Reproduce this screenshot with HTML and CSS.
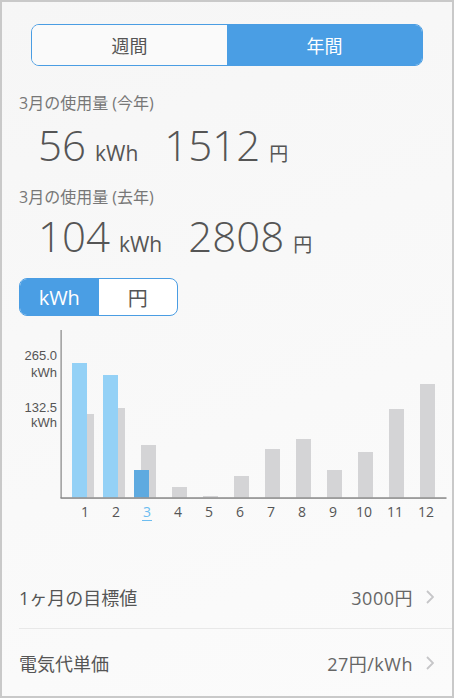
FILE: index.html
```html
<!DOCTYPE html>
<html lang="ja">
<head>
<meta charset="utf-8">
<title>使用量</title>
<link rel="stylesheet" href="styles.css">
</head>
<body>
<div class="app">
  <div class="seg">
    <div class="seg-item">週間</div>
    <div class="seg-item active">年間</div>
  </div>

  <div class="label first">3月の使用量 (今年)</div>
  <div class="vals row1">
    <div class="pair"><span class="num">56</span><span class="unit">kWh</span></div>
    <div class="pair"><span class="num">1512</span><span class="unit yen">円</span></div>
  </div>

  <div class="label second">3月の使用量 (去年)</div>
  <div class="vals row2">
    <div class="pair"><span class="num">104</span><span class="unit">kWh</span></div>
    <div class="pair"><span class="num">2808</span><span class="unit yen">円</span></div>
  </div>

  <div class="toggle">
    <div class="toggle-item active">kWh</div>
    <div class="toggle-item">円</div>
  </div>

  <svg class="chart" width="450" height="200" viewBox="2 325 450 200" xmlns="http://www.w3.org/2000/svg">
    <text class="ylab" x="57" y="360">265.0</text>
    <text class="ylab" x="57" y="377">kWh</text>
    <text class="ylab" x="57" y="412">132.5</text>
    <text class="ylab" x="57" y="427">kWh</text>

    <g class="gray">
      <rect x="79" y="414" width="15" height="83.5"/>
      <rect x="110" y="408" width="15" height="89.5"/>
      <rect x="141" y="445" width="15" height="52.5"/>
      <rect x="172" y="487" width="15" height="10.5"/>
      <rect x="203" y="496" width="15" height="1.5"/>
      <rect x="234" y="476" width="15" height="21.5"/>
      <rect x="265" y="449" width="15" height="48.5"/>
      <rect x="296" y="439" width="15" height="58.5"/>
      <rect x="327" y="470" width="15" height="27.5"/>
      <rect x="358" y="452" width="15" height="45.5"/>
      <rect x="389" y="409" width="15" height="88.5"/>
      <rect x="420" y="384" width="15" height="113.5"/>
    </g>
    <rect class="blue-light" x="72" y="363" width="15" height="134.5"/>
    <rect class="blue-light" x="103" y="375" width="15" height="122.5"/>
    <rect class="blue-dark" x="134" y="470" width="15" height="27.5"/>

    <rect class="axis" x="60.5" y="330" width="1.2" height="168"/>
    <rect class="axis" x="60.5" y="497.3" width="386" height="1.5"/>

    <g class="mlab">
      <text x="85" y="517">1</text>
      <text x="116" y="517">2</text>
      <text class="cur" x="147" y="517">3</text>
      <text x="178" y="517">4</text>
      <text x="209" y="517">5</text>
      <text x="240" y="517">6</text>
      <text x="271" y="517">7</text>
      <text x="302" y="517">8</text>
      <text x="333" y="517">9</text>
      <text x="364" y="517">10</text>
      <text x="395" y="517">11</text>
      <text x="426" y="517">12</text>
    </g>
    <rect class="uline" x="142" y="520" width="10" height="1"/>
  </svg>

  <div class="list">
    <div class="list-row r1">
      <span class="list-label">1ヶ月の目標値</span>
      <span class="list-value">3000円</span>
      <svg class="chev" width="8" height="14" viewBox="0 0 8 14"><path d="M1 1 L7 7 L1 13" fill="none" stroke="#c6c6c8" stroke-width="1.8"/></svg>
    </div>
    <div class="list-row r2">
      <span class="list-label">電気代単価</span>
      <span class="list-value">27円/kWh</span>
      <svg class="chev" width="8" height="14" viewBox="0 0 8 14"><path d="M1 1 L7 7 L1 13" fill="none" stroke="#c6c6c8" stroke-width="1.8"/></svg>
    </div>
  </div>
</div>
</body>
</html>
```

FILE: styles.css
```css
html, body {
  margin: 0;
  padding: 0;
  background: #f8f8f8;
}

body {
  font-family: "Open Sans", "Noto Sans CJK JP", sans-serif;
  color: #555;
}

.app {
  width: 454px;
  height: 698px;
  box-sizing: border-box;
  border: 2px solid #c9c9c9;
  background: linear-gradient(160deg, #f6f6f6 0%, #f9f9f9 60%, #fbfbfb 100%);
  padding-top: 22px;
  overflow: hidden;
}

.seg {
  display: flex;
  margin: 0 29px;
  height: 42px;
  box-sizing: border-box;
  border: 1px solid #4a9de3;
  border-radius: 8px;
  overflow: hidden;
}

.seg-item {
  flex: 1;
  display: flex;
  align-items: center;
  justify-content: center;
  font-size: 18px;
  color: #555;
  background: #fafafa;
}

.seg-item.active {
  background: #4a9ee4;
  color: #fff;
}

.label {
  margin-left: 17px;
  height: 20px;
  line-height: 20px;
  font-size: 16px;
  color: #777;
}

.label.first { margin-top: 27px; }
.label.second { margin-top: 18px; }

.vals {
  display: flex;
  align-items: baseline;
  gap: 26px;
  margin-left: 36px;
  height: 48px;
  line-height: 48px;
}

.vals.row1 { margin-top: 8px; }
.vals.row2 { margin-top: 5px; }

.pair {
  display: flex;
  align-items: baseline;
  gap: 9px;
}

.num {
  font-size: 42px;
  font-weight: 300;
  color: #555;
}

.unit {
  font-size: 21px;
  color: #555;
}

.unit.yen {
  font-size: 19px;
}

.toggle {
  display: flex;
  margin: 18px 0 0 17px;
  width: 159px;
  height: 38px;
  box-sizing: border-box;
  border: 1px solid #4a9de3;
  border-radius: 8px;
  overflow: hidden;
  background: #fff;
}

.toggle-item {
  flex: 1;
  display: flex;
  align-items: center;
  justify-content: center;
  font-size: 20px;
  color: #555;
}

.toggle-item.active {
  background: #4a9ee4;
  color: #fff;
}

.chart {
  display: block;
  margin-top: 9px;
}

.ylab {
  font-family: "Liberation Sans", sans-serif;
  font-size: 13px;
  fill: #555;
  text-anchor: end;
}

.gray rect { fill: #d4d4d6; }
.blue-light { fill: #94d1f6; }
.blue-dark { fill: #5eaae0; }
.axis { fill: #858585; }

.mlab text {
  font-family: "Open Sans", sans-serif;
  font-size: 14px;
  fill: #555;
  text-anchor: middle;
}

.mlab text.cur { fill: #6dbdf0; }
.uline { fill: #6dbdf0; }

.list {
  margin-top: 41px;
  padding-left: 17px;
}

.list-row {
  display: flex;
  align-items: center;
  padding-right: 18px;
  box-sizing: border-box;
  font-size: 18px;
}

.list-row.r1 {
  height: 63px;
  border-bottom: 1px solid #e8e8e8;
}

.list-row.r2 {
  height: 68px;
}

.list-label {
  flex: 1;
  color: #555;
}

.list-value {
  color: #666;
  margin-right: 13px;
  letter-spacing: 0.5px;
}

.chev {
  display: block;
}
```
